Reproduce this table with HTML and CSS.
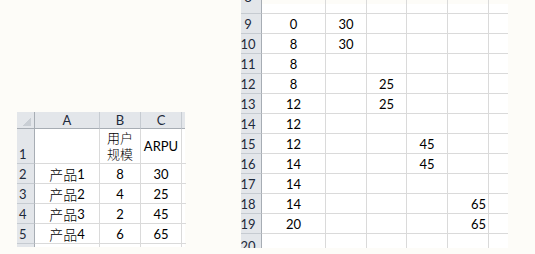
FILE: index.html
```html
<!DOCTYPE html>
<html>
<head>
<meta charset="utf-8">
<link rel="stylesheet" href="styles.css">
</head>
<body>
<div class="page">
  <div class="sheet sheet-left">
    <div class="hd corner"></div>
    <div class="hd col">A</div>
    <div class="hd col">B</div>
    <div class="hd col">C</div>
    <div class="hd col edge"></div>

    <div class="hd row tall">1</div>
    <div class="c tall"></div>
    <div class="c tall ctr wrap"><span class="ln">用户</span><span class="ln">规模</span></div>
    <div class="c tall ctr mid">ARPU</div>
    <div class="c tall edge"></div>

    <div class="hd row">2</div><div class="c ctr"><span class="cjk">产品</span>1</div><div class="c ctr">8</div><div class="c ctr">30</div><div class="c edge"></div>
    <div class="hd row">3</div><div class="c ctr"><span class="cjk">产品</span>2</div><div class="c ctr">4</div><div class="c ctr">25</div><div class="c edge"></div>
    <div class="hd row">4</div><div class="c ctr"><span class="cjk">产品</span>3</div><div class="c ctr">2</div><div class="c ctr">45</div><div class="c edge"></div>
    <div class="hd row">5</div><div class="c ctr"><span class="cjk">产品</span>4</div><div class="c ctr">6</div><div class="c ctr">65</div><div class="c edge"></div>

    <div class="hd row stub"></div><div class="c stub"></div><div class="c stub"></div><div class="c stub"></div><div class="c stub edge"></div>
  </div>

  <div class="sheet sheet-right">
    <div class="hd rlab top"><span class="cut">8</span></div><div class="c top"></div><div class="c top"></div><div class="c top"></div><div class="c top"></div><div class="c top"></div><div class="c top edge"></div>
    <div class="hd rlab">9</div><div class="c ctr">0</div><div class="c ctr">30</div><div class="c"></div><div class="c"></div><div class="c"></div><div class="c edge"></div>
    <div class="hd rlab">10</div><div class="c ctr">8</div><div class="c ctr">30</div><div class="c"></div><div class="c"></div><div class="c"></div><div class="c edge"></div>
    <div class="hd rlab">11</div><div class="c ctr">8</div><div class="c"></div><div class="c"></div><div class="c"></div><div class="c"></div><div class="c edge"></div>
    <div class="hd rlab">12</div><div class="c ctr">8</div><div class="c"></div><div class="c ctr">25</div><div class="c"></div><div class="c"></div><div class="c edge"></div>
    <div class="hd rlab">13</div><div class="c ctr">12</div><div class="c"></div><div class="c ctr">25</div><div class="c"></div><div class="c"></div><div class="c edge"></div>
    <div class="hd rlab">14</div><div class="c ctr">12</div><div class="c"></div><div class="c"></div><div class="c"></div><div class="c"></div><div class="c edge"></div>
    <div class="hd rlab">15</div><div class="c ctr">12</div><div class="c"></div><div class="c"></div><div class="c ctr">45</div><div class="c"></div><div class="c edge"></div>
    <div class="hd rlab">16</div><div class="c ctr">14</div><div class="c"></div><div class="c"></div><div class="c ctr">45</div><div class="c"></div><div class="c edge"></div>
    <div class="hd rlab">17</div><div class="c ctr">14</div><div class="c"></div><div class="c"></div><div class="c"></div><div class="c"></div><div class="c edge"></div>
    <div class="hd rlab">18</div><div class="c ctr">14</div><div class="c"></div><div class="c"></div><div class="c"></div><div class="c rgt">65</div><div class="c edge"></div>
    <div class="hd rlab">19</div><div class="c ctr">20</div><div class="c"></div><div class="c"></div><div class="c"></div><div class="c rgt">65</div><div class="c edge"></div>
    <div class="hd rlab bot"><span class="cut2">20</span></div><div class="c bot"></div><div class="c bot"></div><div class="c bot"></div><div class="c bot"></div><div class="c bot"></div><div class="c bot edge"></div>
  </div>
</div>
</body>
</html>
```

FILE: styles.css
```css
html, body {
  margin: 0;
  padding: 0;
  background: #fdfcf8;
}

.page {
  display: flex;
  align-items: flex-start;
  width: 535px;
  height: 254px;
  overflow: hidden;
}

.sheet {
  display: grid;
  font-family: Lato, "Noto Sans CJK SC", sans-serif;
  font-size: 13px;
  color: #000;
  background: #fff;
}

.sheet-left {
  margin: 112px 0 0 17px;
  grid-template-columns: 18px 65px 41px 41px 3px;
  grid-template-rows: 17px 35px 20px 20px 20px 20px 3px;
}

.sheet-right {
  margin: 0 0 0 56px;
  grid-template-columns: 21px 64px 41px 40px 41px 41px 19px;
  grid-template-rows: 14px repeat(11, 20px) 14px;
}

.c, .hd {
  box-sizing: border-box;
  border-right: 1px solid #dadada;
  border-bottom: 1px solid #dadada;
  display: flex;
  align-items: flex-end;
  padding: 0 2px 1px 2px;
  line-height: 16px;
  white-space: nowrap;
  overflow: hidden;
}

.hd {
  background: #e3e6ea;
  color: #1e2a3a;
  border-right-color: #c6cbd1;
  border-bottom-color: #c6cbd1;
}

.hd.col {
  justify-content: center;
  align-items: center;
  padding: 0;
  border-bottom-color: #a7adb4;
}

.hd.row, .hd.rlab {
  border-right-color: #a7adb4;
}

.hd.rlab {
  padding: 0 8px 1px 2px;
  justify-content: center;
}

.corner {
  background:
    linear-gradient(135deg, transparent 58%, #c9ced4 58%) no-repeat right 3px bottom 2px / 10px 10px,
    #e3e6ea;
  border-bottom-color: #a7adb4;
  border-right-color: #a7adb4;
}

.edge {
  border-right: none;
}

.ctr {
  justify-content: center;
}

.rgt {
  justify-content: flex-end;
}

.mid {
  align-items: center;
}

.cjk {
  font-size: 14px;
  font-family: "Noto Sans CJK SC", sans-serif;
  font-weight: 300;
}

.wrap {
  flex-direction: column;
  align-items: center;
  justify-content: center;
  gap: 0;
  padding: 0;
  overflow: visible;
  font-size: 13px;
  font-family: "Noto Sans CJK SC", sans-serif;
  font-weight: 300;
}

.ln {
  display: block;
  line-height: 16px;
  height: 16px;
}

.top {
  background: linear-gradient(#fdfcf8 0 4px, #fff 4px);
}

.hd.top {
  background: #e3e6ea;
  align-items: flex-start;
  padding-top: 0;
}

.cut {
  display: block;
  margin-top: -11px;
  line-height: 16px;
}

.bot {
  border-bottom: none;
}

.hd.bot {
  align-items: flex-start;
}

.cut2 {
  display: block;
  line-height: 16px;
  margin-top: 4px;
}

.stub {
  border-bottom: none;
}
```
